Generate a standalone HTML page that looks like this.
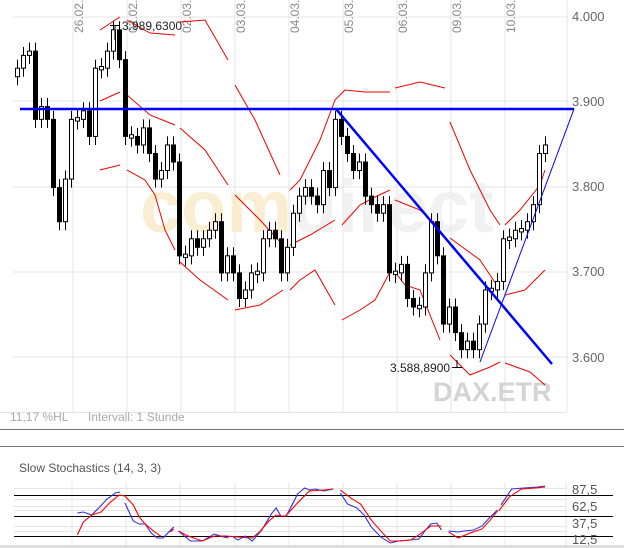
<!DOCTYPE html>
<html><head><meta charset="utf-8"><style>
body{margin:0;background:#fff;width:624px;height:548px;overflow:hidden;font-family:"Liberation Sans",sans-serif}
svg{display:block}
</style></head><body>
<svg id="s" width="624" height="548" xmlns="http://www.w3.org/2000/svg" font-family="Liberation Sans, sans-serif">
<g stroke="#e4e4e4" stroke-width="1" fill="none">
<path d="M13 17H568M13 101H568M13 187H568M13 272H568M13 357H568"/>
<path d="M73 0V412M127 0V412M181 0V412M235 0V412M289 0V412M343 0V412M397 0V412M451 0V412M505 0V412M567 0V412M0 412.5H567"/>
</g>
<g fill="#888" font-size="12">
<text transform="translate(83,33) rotate(-90)">26.02.</text>
<text transform="translate(137,33) rotate(-90)">02.02.</text>
<text transform="translate(191,33) rotate(-90)">02.03.</text>
<text transform="translate(245,33) rotate(-90)">03.03.</text>
<text transform="translate(299,33) rotate(-90)">04.03.</text>
<text transform="translate(353,33) rotate(-90)">05.03.</text>
<text transform="translate(407,33) rotate(-90)">06.03.</text>
<text transform="translate(461,33) rotate(-90)">09.03.</text>
<text transform="translate(515,33) rotate(-90)">10.03.</text>
</g>
<g fill="#666" font-size="13">
<text x="572" y="21">4.000</text><text x="572" y="106">3.900</text><text x="572" y="191">3.800</text><text x="572" y="276">3.700</text><text x="572" y="362">3.600</text>
</g>
<text x="140" y="232" font-size="74" font-weight="bold" fill="#f8ebc6" opacity="0.8">com<tspan fill="#eeeeee">direct</tspan></text>
<text x="433" y="401" font-size="27" font-weight="bold" fill="#d4d4d4">DAX.ETR</text>
<g id="bb" stroke="#e00" stroke-width="1" fill="none"></g>
<g id="cd"></g>
<g stroke="#00f" fill="none">
<path d="M20 109H574" stroke-width="2.5"/>
<path d="M336 109L552 364" stroke-width="2.5"/>
<path d="M480 362L574 109" stroke-width="1"/>
</g>
<g stroke="#000" stroke-width="1"><path d="M110 25.5H120M115 25V40M452 367.5H462M457 360V368"/></g>
<text x="122" y="30" font-size="12" fill="#222">3.989,6300</text>
<text x="390" y="372" font-size="12" fill="#222">3.588,8900</text>
<text x="10" y="421" font-size="12" fill="#aaa">11,17 %HL</text>
<text x="88" y="421" font-size="12" fill="#aaa">Intervall: 1 Stunde</text>
<path d="M0 429.5H624M0 446.5H624" stroke="#777" stroke-width="1"/>
<text x="19" y="472" font-size="12" fill="#555">Slow Stochastics (14, 3, 3)</text>
<g stroke="#e4e4e4" stroke-width="1">
<path d="M14 488.5H566M14 499.5H566M14 506.5H566M14 510.5H566M14 526.5H566M14 531.5H566"/>
<path d="M72 482V545M126 482V545M180 482V545M235 482V545M289 482V545M343 482V545M397 482V545M451 482V545M505 482V545M566 482V545"/>
</g>
<path d="M14 495.5H613M14 516.5H613M14 536.5H613" stroke="#000" stroke-width="1"/>
<g fill="#555" font-size="13"><text x="572" y="494">87,5</text><text x="572" y="511">62,5</text><text x="572" y="528">37,5</text><text x="572" y="544">12,5</text></g>
<g fill="none" stroke-width="1" transform="scale(1.19,1)">
<g stroke="#33d">
<polyline points="65,513 70,512 77,515 83,508 90,499 97,493 101,492"/>
<polyline points="105,503 112,521 117,524 122,524 127,533 132,538 137,538 146,527"/>
<polyline points="150,531 160,541 170,541 180,534 188,537 192,538"/>
<polyline points="196,537 200,540 206,536 212,541 220,530 228,514 232,508 236,516"/>
<polyline points="240,517 245,506 250,494 256,488 260,490 265,489 272,491 280,489"/>
<polyline points="286,493 292,504 300,508 306,515 312,527 320,537 328,543 335,541 345,540 352,539 357,531 362,524 367,523 371,530"/>
<polyline points="377,531 385,532 390,531 398,530 405,526 412,517 418,510"/>
<polyline points="421,505 430,489 440,488 452,487 458,486"/>
</g>
<g stroke="#f00">
<polyline points="65,535 70,522 77,515 85,512 92,503 100,495 105,496 112,505 117,517 122,524 130,532 135,536"/>
<polyline points="143,532 146,529"/>
<polyline points="150,531 158,536 170,541 180,536 190,536 200,537 212,538 218,532 226,521 232,515 236,516 240,516 250,503 260,491 272,490 280,489"/>
<polyline points="286,490 296,499 303,504 312,520 320,531 328,541 335,541 345,540 352,535 362,526 367,526 371,526"/>
<polyline points="377,532 385,538 395,533 405,529 412,520 418,511"/>
<polyline points="419,511 428,497 438,489 450,488 458,487"/>
</g>
</g>
<rect x="0" y="545" width="624" height="3" fill="#ddd"/>
</svg>
<script>
function Y(p){return 17+(4000-p)*0.853;}
var c=[3940,3955,3960,3880,3895,3880,3800,3760,3810,3880,3880,3890,3860,3940,3940,3960,3985,3950,3860,3860,3850,3870,3840,3810,3820,3850,3830,3720,3720,3740,3730,3740,3750,3760,3700,3720,3700,3670,3680,3700,3700,3740,3750,3740,3700,3730,3770,3790,3800,3790,3780,3820,3800,3880,3860,3840,3820,3830,3790,3780,3770,3780,3700,3700,3710,3670,3660,3660,3700,3760,3720,3640,3660,3630,3610,3620,3610,3640,3680,3680,3690,3740,3740,3750,3750,3760,3780,3840,3850];
var g=document.getElementById('cd'),o=3930,h="";
for(var i=0;i<c.length;i++){var x=17+i*6,cl=c[i],t=Math.max(o,cl),b=Math.min(o,cl);
if(t-b<3){t+=2;b-=2;}
h+='<line x1="'+(x+.5)+'" x2="'+(x+.5)+'" y1="'+Y(t+10)+'" y2="'+Y(b-10)+'" stroke="#000"/>';
h+='<rect x="'+(x-1.5)+'" y="'+Y(t)+'" width="4" height="'+(Y(b)-Y(t))+'" fill="'+(cl<o?'#000':'#fff')+'" stroke="#000" stroke-width="1"/>';
o=cl;}
g.innerHTML=h;
var bands=["100,30 120,17","127,20 150,33 175,35","180,22 205,20 228,60","235,85 255,120 280,175","290,190 300,180 320,140 335,100 345,90 365,92 390,92","395,88 420,82 445,88","450,122 470,170 490,210 500,225","505,225 520,210 540,185 545,170",
"100,101 120,92","127,95 150,115 175,125","180,128 205,150 228,185","235,195 260,220 283,245","290,245 310,235 335,220","342,225 360,205 375,197 390,190","395,200 420,210 440,228","450,238 480,260 500,290","505,295 525,290 545,270",
"100,170 120,165","127,170 145,180 155,195 165,230 175,250","180,262 200,280 228,300","235,310 260,305 283,290","290,290 300,280 315,270 335,305","342,320 360,310 375,300 390,272","395,272 405,285 420,290 440,340","450,355 470,375 490,367 500,362","505,363 530,372 545,385"];
var bh="";bands.forEach(function(p){bh+='<polyline points="'+p+'"/>';});
document.getElementById('bb').innerHTML=bh;
</script>
</body></html>
